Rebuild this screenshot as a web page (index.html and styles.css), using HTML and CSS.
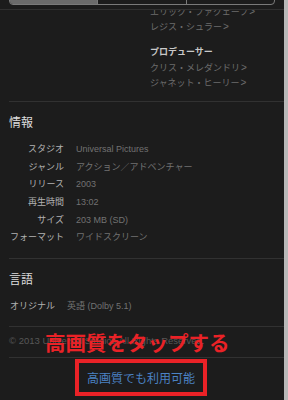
FILE: index.html
```html
<!DOCTYPE html>
<html>

	<head>

		<meta charset="UTF-8">
		<link rel="stylesheet" href="styles.css">
		<title>情報</title>

	</head>

	<body>

		<div class="screen">
			<div class="top-bar">
				<div class="segments">
					<span class="segment segment-active"></span>
					<span class="segment"></span>
					<span class="segment"></span>
				</div>
			</div>

			<div class="content">
				<div class="credits">
					<p class="credit-link">エリック・ファクェーフ<span class="chevron">&gt;</span></p>
					<p class="credit-link">レジス・シュラー<span class="chevron">&gt;</span></p>
					<p class="credit-title">プロデューサー</p>
					<p class="credit-link">クリス・メレダンドリ<span class="chevron">&gt;</span></p>
					<p class="credit-link">ジャネット・ヒーリー<span class="chevron">&gt;</span></p>
				</div>

				<div class="section">
					<h2 class="section-title">情報</h2>
					<table class="details">
						<tr><td class="details-label">スタジオ</td><td class="details-value">Universal Pictures</td></tr>
						<tr><td class="details-label">ジャンル</td><td class="details-value">アクション／アドベンチャー</td></tr>
						<tr><td class="details-label">リリース</td><td class="details-value">2003</td></tr>
						<tr><td class="details-label">再生時間</td><td class="details-value">13:02</td></tr>
						<tr><td class="details-label">サイズ</td><td class="details-value">203 MB (SD)</td></tr>
						<tr><td class="details-label">フォーマット</td><td class="details-value">ワイドスクリーン</td></tr>
					</table>
				</div>

				<div class="section">
					<h2 class="section-title">言語</h2>
					<table class="details">
						<tr><td class="details-label">オリジナル</td><td class="details-value">英語 (Dolby 5.1)</td></tr>
					</table>
				</div>

				<div class="section section-copyright">
					<p class="copyright">© 2013 Universal Studios All Rights Reserved.</p>
					<p class="annotation">高画質をタップする</p>
				</div>

				<div class="hd-row">
					<a class="hd-link">高画質でも利用可能</a>
				</div>
			</div>
		</div>

	</body>
</html>
```

FILE: styles.css
```css
body {
	margin: 0;
	background: #1c1c1c;
	font-family: "Liberation Sans", "Noto Sans CJK JP", sans-serif;
}
p, h2 {
	margin: 0;
}
.screen {
	position: relative;
	width: 284px;
	height: 400px;
	overflow: hidden;
	border-right: 4px solid #b9b9b9;
}
.top-bar {
	position: absolute;
	top: 0;
	left: 0;
	right: 0;
	height: 9px;
	background: #1c1c1c;
	border-bottom: 1px solid #303030;
	z-index: 2;
}
.segments {
	display: flex;
	width: 264px;
	height: 22px;
	margin: -19px 0 0 9px;
	border: 1px solid #7a7a7a;
	border-radius: 4px;
	overflow: hidden;
}
.segment {
	flex: 1;
	border-left: 1px solid #7a7a7a;
}
.segment:first-child {
	border-left: 0;
}
.segment-active {
	background: #6b6b6b;
}
.content {
	padding-left: 9px;
}
.credits {
	padding: 4px 0 11px 141px;
	border-bottom: 1px solid #313131;
	font-size: 9px;
}
.credit-link,
.credit-title {
	height: 15px;
	line-height: 15px;
	white-space: nowrap;
}
.credit-link {
	color: #6c6c6c;
}
.chevron {
	margin-left: 1px;
	font-size: 10px;
}
.credit-title {
	margin-top: 11px;
	color: #c9c9c9;
	font-weight: bold;
}
.section {
	padding: 13px 0 11px;
	border-bottom: 1px solid #313131;
}
.section-title {
	height: 16px;
	font-size: 12px;
	line-height: 16px;
	font-weight: normal;
	color: #dcdcdc;
}
.details {
	margin-top: 10px;
	border-collapse: collapse;
	font-size: 9px;
}
.details td {
	padding: 0;
	height: 17.6px;
	line-height: 1;
	vertical-align: middle;
	white-space: nowrap;
}
.details-label {
	text-align: right;
	color: #b2b2b2;
	padding-left: 1px !important;
}
.details-value {
	padding-left: 12px !important;
	color: #727272;
}
.section-copyright {
	position: relative;
	padding: 7px 0 9px;
}
.copyright {
	height: 14px;
	font-size: 9.5px;
	line-height: 14px;
	color: #575757;
}
.annotation {
	position: absolute;
	top: 3px;
	left: 36px;
	font-size: 20.5px;
	line-height: 24px;
	font-weight: bold;
	color: #ea2227;
	font-family: "Noto Sans CJK JP", sans-serif;
	white-space: nowrap;
}
.hd-row {
	padding: 1px 0 0 66px;
}
.hd-link {
	display: block;
	box-sizing: border-box;
	width: 132px;
	height: 37px;
	border: 4px solid #ea2227;
	text-align: center;
	font-size: 12px;
	line-height: 29px;
	color: #4b82c4;
	font-family: "Noto Sans CJK JP", sans-serif;
}
```
